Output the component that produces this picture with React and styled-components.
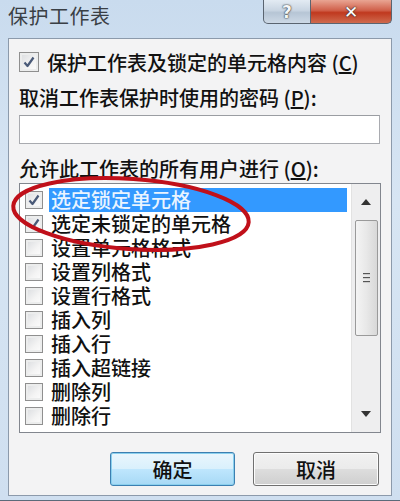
import React from 'react'
import styled, { createGlobalStyle } from 'styled-components'

const Global = createGlobalStyle`
  html, body { margin: 0; padding: 0; }
  body {
    width: 400px;
    height: 501px;
    overflow: hidden;
    font-family: "Noto Sans CJK SC", "Noto Sans", sans-serif;
  }
`

const Window = styled.div`
  position: relative;
  width: 400px;
  height: 501px;
  box-sizing: border-box;
  background: linear-gradient(180deg, #c9dbee 0%, #d7e5f3 40%, #cfdff0 100%);
  display: flex;
  flex-direction: column;
  padding: 0 8px 4px 8px;
  border-bottom: 1px solid #5b6a7a;
`

const TitleBar = styled.div`
  height: 38px;
  display: flex;
  align-items: flex-start;
  justify-content: space-between;
`

const Title = styled.div`
  font-size: 20px;
  line-height: 20px;
  margin-top: 6px;
  color: #3a3f45;
  letter-spacing: 0.5px;
`

const Controls = styled.div`
  display: flex;
`

const CtrlButton = styled.div`
  height: 24px;
  width: ${p => p.$w}px;
  box-sizing: border-box;
  border: 1px solid #5a6470;
  border-top: none;
  display: flex;
  align-items: center;
  justify-content: center;
  font-family: "DejaVu Sans", sans-serif;
  font-weight: bold;
  font-size: 17px;
  background: ${p => p.$close
    ? 'linear-gradient(180deg, #e9a593 0%, #d0604a 45%, #c0391f 55%, #cf6a4e 100%)'
    : 'linear-gradient(180deg, #e3ebf3 0%, #c9d5e2 45%, #b6c5d5 55%, #cdd9e6 100%)'};
  color: ${p => p.$close ? '#fff' : '#f4f6f8'};
  text-shadow: 0 0 2px #333, 0 0 1px #222;
  border-radius: ${p => p.$close ? '0 0 5px 0' : '0 0 0 5px'};
  border-left: ${p => p.$close ? 'none' : '1px solid #5a6470'};
`

const Client = styled.div`
  flex: 1;
  background: #f3f3f4;
  border: 1px solid #8c9aab;
  display: flex;
  flex-direction: column;
  padding: 11px 10px 0 10px;
  color: #111;
  font-size: 20px;
  font-weight: 500;
`

const CheckRow = styled.label`
  display: flex;
  align-items: center;
  height: 24px;
  gap: 8px;
`

const Box = styled.span`
  width: ${p => p.$size || 18}px;
  height: ${p => p.$size || 18}px;
  flex: none;
  box-sizing: border-box;
  border: 1px solid #8f8f8f;
  background: linear-gradient(135deg, #d9dbde 0%, #f4f4f4 60%, #fdfdfd 100%);
  box-shadow: inset 0 0 0 2px #eceded;
  display: flex;
  align-items: center;
  justify-content: center;
`

const Label = styled.div`
  height: 24px;
  line-height: 24px;
  margin-top: ${p => p.$mt || 0}px;
  white-space: nowrap;
`

const Input = styled.div`
  height: 29px;
  box-sizing: border-box;
  margin-top: 5px;
  margin-right: 1px;
  background: #fff;
  border: 1px solid #a9abb0;
  border-top-color: #9a9da2;
`

const ListBox = styled.div`
  margin-top: 2px;
  height: 250px;
  box-sizing: border-box;
  border: 1px solid #82868e;
  background: #fff;
  display: flex;
`

const Rows = styled.div`
  flex: 1;
  padding-top: 4px;
  display: flex;
  flex-direction: column;
`

const Row = styled.div`
  height: 24px;
  display: flex;
  align-items: center;
  padding-left: 5px;
`

const ItemText = styled.div`
  flex: 1;
  margin-left: 6px;
  margin-right: 4px;
  height: 24px;
  line-height: 24px;
  padding-left: 2px;
  white-space: nowrap;
  background: ${p => p.$selected ? '#3399ff' : 'transparent'};
  color: ${p => p.$selected ? '#eaf4ff' : '#111'};
`

const ScrollBar = styled.div`
  width: 28px;
  background: #eeeeef;
  border-left: 1px solid #e2e2e2;
  display: flex;
  flex-direction: column;
  align-items: center;
`

const Arrow = styled.div`
  height: 36px;
  display: flex;
  align-items: center;
  justify-content: center;
`

const Thumb = styled.div`
  width: 23px;
  height: 116px;
  box-sizing: border-box;
  border: 1px solid #9a9a9a;
  border-radius: 2px;
  background: linear-gradient(90deg, #f4f4f4 0%, #e8e8e8 50%, #d8d8d8 100%);
  display: flex;
  flex-direction: column;
  align-items: center;
  justify-content: center;
  gap: 2px;
`

const Grip = styled.span`
  width: 7px;
  height: 1px;
  background: #555;
  border-bottom: 1px solid #ccc;
`

const Track = styled.div`
  flex: 1;
`

const Buttons = styled.div`
  display: flex;
  justify-content: flex-end;
  gap: 18px;
  margin-top: 19px;
  margin-right: 2px;
`

const Button = styled.button`
  width: ${p => p.$w}px;
  height: 34px;
  box-sizing: border-box;
  border: 1px solid ${p => p.$default ? '#3c7fb1' : '#707070'};
  border-radius: 3px;
  background: ${p => p.$default
    ? 'linear-gradient(180deg, #eaf6fd 0%, #d9f0fc 50%, #bee6fd 51%, #a7d9f5 100%)'
    : 'linear-gradient(180deg, #f2f2f2 0%, #ebebeb 50%, #dddddd 51%, #cfcfcf 100%)'};
  box-shadow: inset 0 0 0 1px ${p => p.$default ? '#8ad0ee' : '#fcfcfc'};
  font-family: "Noto Sans CJK SC", sans-serif;
  font-size: 20px;
  font-weight: 500;
  color: #111;
  padding: 0;
`

const Annotation = styled.svg`
  position: absolute;
  left: 0;
  top: 0;
  pointer-events: none;
`

const Check = () => (
  <svg width="14" height="14" viewBox="0 0 14 14">
    <path d="M2.5 7.5 L5.5 11 L11.5 2.5" fill="none" stroke="#4a5a78" strokeWidth="2.2" strokeLinejoin="round" />
  </svg>
)

const items = [
  { text: '选定锁定单元格', checked: true, selected: true },
  { text: '选定未锁定的单元格', checked: true },
  { text: '设置单元格格式' },
  { text: '设置列格式' },
  { text: '设置行格式' },
  { text: '插入列' },
  { text: '插入行' },
  { text: '插入超链接' },
  { text: '删除列' },
  { text: '删除行' },
]

const App = () => {
  return (
    <Window>
      <Global />
      <TitleBar>
        <Title>保护工作表</Title>
        <Controls>
          <CtrlButton $w={48}>?</CtrlButton>
          <CtrlButton $w={81} $close>✕</CtrlButton>
        </Controls>
      </TitleBar>
      <Client>
        <CheckRow>
          <Box $size={20}><Check /></Box>
          <span>保护工作表及锁定的单元格内容 (<u>C</u>)</span>
        </CheckRow>
        <Label $mt={12}>取消工作表保护时使用的密码 (<u>P</u>):</Label>
        <Input />
        <Label $mt={13}>允许此工作表的所有用户进行 (<u>O</u>):</Label>
        <ListBox>
          <Rows>
            {items.map(it => (
              <Row key={it.text}>
                <Box>{it.checked && <Check />}</Box>
                <ItemText $selected={it.selected}>{it.text}</ItemText>
              </Row>
            ))}
          </Rows>
          <ScrollBar>
            <Arrow>
              <svg width="10" height="6" viewBox="0 0 10 6"><path d="M0 6 L5 0 L10 6 Z" fill="#333" /></svg>
            </Arrow>
            <Thumb>
              <Grip /><Grip /><Grip />
            </Thumb>
            <Track />
            <Arrow>
              <svg width="10" height="6" viewBox="0 0 10 6"><path d="M0 0 L5 6 L10 0 Z" fill="#333" /></svg>
            </Arrow>
          </ScrollBar>
        </ListBox>
        <Buttons>
          <Button $w={125} $default>确定</Button>
          <Button $w={126}>取消</Button>
        </Buttons>
      </Client>
      <Annotation width="400" height="501">
        <ellipse cx="131" cy="214" rx="118" ry="35" transform="rotate(4 131 214)"
          fill="none" stroke="#c0101a" strokeWidth="4" />
      </Annotation>
    </Window>
  )
}

export default App
